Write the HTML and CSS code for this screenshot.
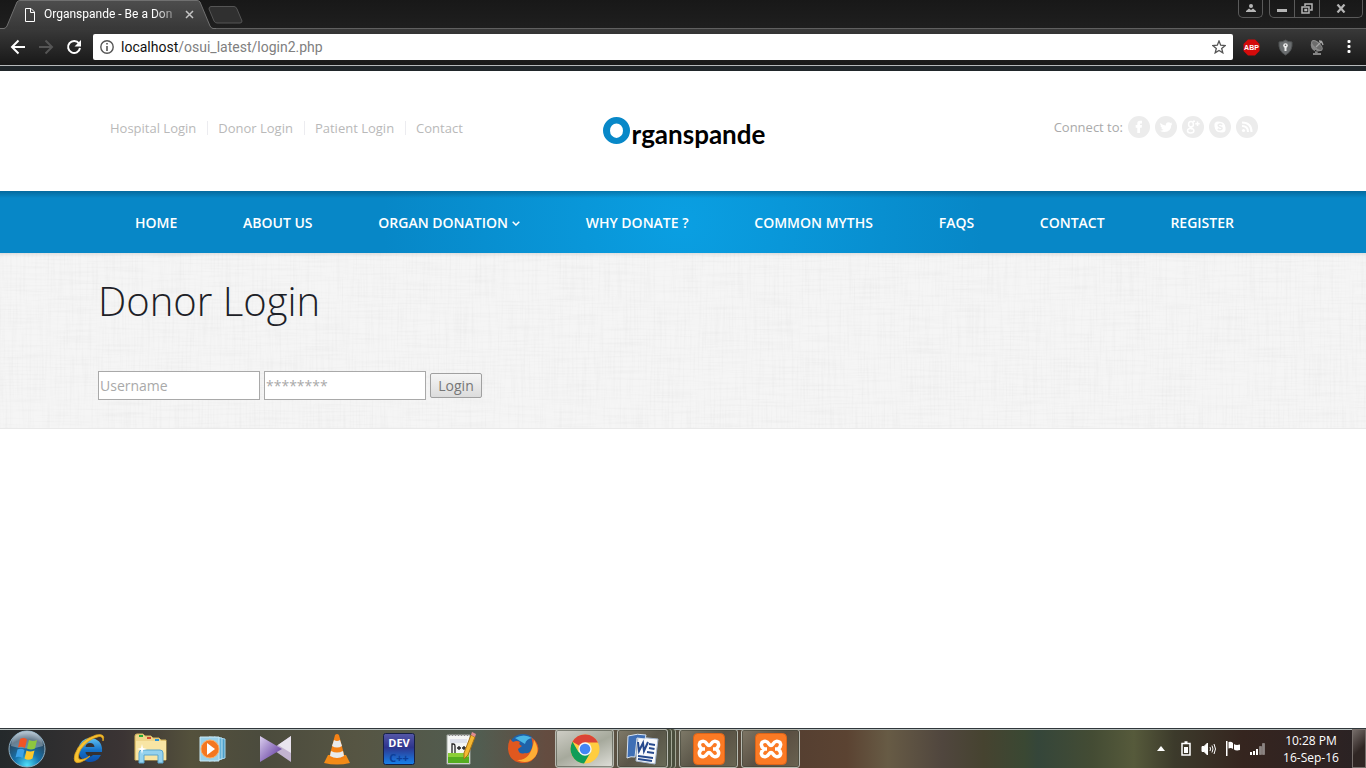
FILE: index.html
```html
<!DOCTYPE html>
<html lang="en">
<head>
<meta charset="utf-8">
<meta name="viewport" content="width=device-width, initial-scale=1">
<title>Organspande - Be a Donor</title>
<link rel="stylesheet" href="styles.css">
</head>
<body>
<div class="browser">
  <div class="tabs">
    <div class="tab">
      <svg class="tab-shape" width="216" height="29" viewBox="0 0 216 29" aria-hidden="true">
        <defs><linearGradient id="tabfill" x1="0" y1="0" x2="0" y2="1"><stop offset="0" stop-color="#4d4d4d"/><stop offset="1" stop-color="#383838"/></linearGradient></defs>
        <path d="M0 28.5H4Q6 28 7 26L17 2Q18 .5 20 .5H197Q199 .5 200 2L210 26Q211 28 213 28.5V29H0Z" fill="url(#tabfill)"/>
        <path d="M0 28.5H4Q6 28 7 26L17 2Q18 .5 20 .5H197Q199 .5 200 2L210 26Q211 28 213 28.5H216" fill="none" stroke="#707070"/>
      </svg>
      <svg class="tab-file" width="10" height="14" viewBox="0 0 10 14" fill="none" stroke="#fff" aria-hidden="true"><path d="M.5.5H6L9.500 4V13.500H.5ZM5.500.5V4.500H9.500"/></svg>
      <span class="tab-title">Organspande - Be a Don</span>
      <button class="tab-close" aria-label="Close tab"><svg width="9" height="9" viewBox="0 0 9 9" stroke="#c4c4c4" stroke-width="1.500"><path d="M1 1L8 8M8 1L1 8"/></svg></button>
    </div>
    <button class="new-tab" aria-label="New tab"><svg width="36" height="18" viewBox="0 0 36 18"><path d="M3 .5H26Q28 .5 29 3L34 15Q34 17 32 17H9Q7 17 6 15L1 3Q1 .5 3 .5Z" fill="#303030" stroke="#555"/></svg></button>
    <div class="win-buttons">
      <button class="win-user" aria-label="Profile"><svg width="10" height="9" viewBox="0 0 10 9" fill="#b5b5b5"><circle cx="5" cy="2" r="2"/><path d="M0 8V7L3 4.500 5 6 7 4.500 10 7V8Z"/></svg></button>
      <div class="win-group">
        <button class="win-min" aria-label="Minimize"><svg width="10" height="9" viewBox="0 0 10 9" fill="#b5b5b5"><path d="M0 5H10V8H0Z"/></svg></button>
        <button class="win-max" aria-label="Restore"><svg width="12" height="11" viewBox="0 0 12 11" fill="none" stroke="#b5b5b5" stroke-width="1.500"><path d="M4 3V1H11V7H9M1 4H8V10H1ZM4 6.500H5.500V7.500H4Z"/></svg></button>
        <button class="win-close" aria-label="Close"><svg width="10" height="9" viewBox="0 0 10 9" stroke="#b5b5b5" stroke-width="2.200"><path d="M1.500 .5L8.500 8.500M8.500 .5L1.500 8.500"/></svg></button>
      </div>
    </div>
  </div>
  <div class="toolbar">
    <button class="tool" aria-label="Back"><svg width="16" height="16" viewBox="0 0 16 16" fill="none" stroke="#fff" stroke-width="2"><path d="M15 8H2.500M8.500 1.500L2 8L8.500 14.500"/></svg></button>
    <button class="tool" aria-label="Forward"><svg width="16" height="16" viewBox="0 0 16 16" fill="none" stroke="#555" stroke-width="2"><path d="M1 8H13.500M7.500 1.500L14 8L7.500 14.500"/></svg></button>
    <button class="tool" aria-label="Reload"><svg width="16" height="16" viewBox="0 0 16 16"><path d="M13 4.500A6 6 0 1 0 14 9" fill="none" stroke="#fff" stroke-width="2"/><path d="M15 1V7.500H8.500Z" fill="#fff"/></svg></button>
    <div class="address">
      <svg width="14" height="14" viewBox="0 0 14 14" aria-hidden="true"><circle cx="7" cy="7" r="6.200" fill="none" stroke="#555" stroke-width="1.400"/><path d="M6.200 3H7.800V4.600H6.200ZM6.200 6H7.800V11H6.200Z" fill="#555"/></svg>
      <a class="url" href="#"><b>localhost</b>/osui_latest/login2.php</a>
      <button class="star" aria-label="Bookmark this page"><svg width="14" height="14" viewBox="0 0 14 14" fill="none" stroke="#555" stroke-width="1.300"><path d="M7 1L8.700 5.200L13.200 5.500L9.700 8.400L10.800 12.800L7 10.400L3.200 12.800L4.300 8.400L.8 5.500L5.300 5.200Z"/></svg></button>
    </div>
    <div class="extensions">
      <button class="ext" aria-label="Adblock Plus"><svg width="17" height="17" viewBox="0 0 17 17"><path d="M5 .5H12L16.500 5V12L12 16.500H5L.5 12V5Z" fill="#d40b0b"/><text x="8.500" y="11" class="abp">ABP</text></svg></button>
      <button class="ext" aria-label="Privacy"><svg width="15" height="17" viewBox="0 0 15 17"><path d="M7.500 1Q10 3 14 3Q15 12 7.500 16Q0 12 1 3Q5 3 7.500 1Z" fill="#6b6e70" stroke="#505354"/><circle cx="7.500" cy="6.500" r="2.300" fill="#eee"/><path d="M6.500 7H8.500V12H6.500Z" fill="#eee"/><circle cx="7.500" cy="6.300" r=".8" fill="#555"/></svg></button>
      <button class="ext" aria-label="Satellite"><svg width="15" height="17" viewBox="0 0 15 17"><path d="M2 2Q-1 7 3 11Q7 14 12 11ZM6 11L8 14H11V16H3V14H5V11Z" fill="#858585"/><ellipse cx="7" cy="6.500" rx="3" ry="6.500" transform="rotate(-48 7 6.500)" fill="#6c6c6c" stroke="#8d8d8d"/><path d="M6 8L12 2M9 2Q12 2 13 6" stroke="#a5a5a5" stroke-width="1.300" fill="none"/></svg></button>
      <button class="ext ext-menu" aria-label="Menu"><svg width="4" height="14" viewBox="0 0 4 14" fill="#fff"><rect x=".5" y="0" width="3" height="3" rx="1"/><rect x=".5" y="5" width="3" height="3" rx="1"/><rect x=".5" y="10" width="3" height="3" rx="1"/></svg></button>
    </div>
  </div>
</div>

<div class="page">
  <header class="header">
    <div class="container header-row">
      <ul class="quick">
        <li><a href="#">Hospital Login</a></li>
        <li><a href="#">Donor Login</a></li>
        <li><a href="#">Patient Login</a></li>
        <li><a href="#">Contact</a></li>
      </ul>
      <a class="logo" href="#" aria-label="Organspande">
        <svg width="27" height="27" viewBox="0 0 27 27"><path fill-rule="evenodd" fill="#0888c8" d="M13.500 0A13.500 13.500 0 1 1 13.500 27A13.500 13.500 0 1 1 13.500 0ZM13.500 6.500A6.500 7.200 0 1 0 13.500 20.900A6.500 7.200 0 1 0 13.500 6.500Z"/></svg>
        <span>rganspande</span>
      </a>
      <div class="social">
        <span>Connect to:</span>
        <a href="#" aria-label="Facebook"><svg viewBox="0 0 22 22"><path d="M9.300 17V11.700H7.700V9H9.300V7.500Q9.300 4.800 12 4.800H14V7.500H12.700Q12 7.500 12 8.200V9H14L13.700 11.700H12V17Z"/></svg></a>
        <a href="#" aria-label="Twitter"><svg viewBox="0 0 22 22"><path d="M5.300 7Q7.800 9.500 10.800 9.400Q10.600 6.500 13.500 6.300Q14.800 6.300 15.500 7L17 6.500L16.500 8L17.500 7.800L16.300 9.300Q16 16 9.500 16Q7 16 5 14.800Q7.300 14.800 8.500 13.800Q6.800 13.500 6.300 12H7.300Q5.500 11.200 5.400 9.500L6.300 9.800Q4.600 8.500 5.300 7Z"/></svg></a>
        <a href="#" aria-label="Google Plus"><svg viewBox="0 0 22 22"><ellipse cx="9" cy="8.300" rx="2.400" ry="2.800" class="line"/><ellipse cx="8.700" cy="14.800" rx="3.200" ry="2.200" class="line"/><path d="M11 5.300H13M10 10.500Q7.500 11 8.500 12L10.500 13M15.500 5.500V10M13.300 7.700H17.700" class="line"/></svg></a>
        <a href="#" aria-label="Skype"><svg viewBox="0 0 22 22"><circle cx="9" cy="9" r="3.600"/><circle cx="13" cy="13" r="3.600"/><circle cx="11" cy="11" r="5.300"/><path class="cut" d="M13.200 8.800Q11 7.300 9.300 8.800Q8.700 10.400 11 10.900Q13.700 11.500 12.900 13Q11.200 14.500 8.700 13"/></svg></a>
        <a href="#" aria-label="RSS"><svg viewBox="0 0 22 22"><circle cx="7.500" cy="14.500" r="1.600"/><path class="rss" d="M6 10Q12 10 12 16M6 6.500Q15.500 6.500 15.500 16"/></svg></a>
      </div>
    </div>
  </header>
  <nav class="nav" aria-label="Main">
    <ul class="container menu">
      <li><a href="#">HOME</a></li>
      <li><a href="#">ABOUT US</a></li>
      <li><a href="#">ORGAN DONATION <svg width="8" height="5" viewBox="0 0 8 5" fill="none" stroke="#fff" stroke-width="1.500"><path d="M.7.7L4 4L7.300.7"/></svg></a></li>
      <li><a href="#">WHY DONATE ?</a></li>
      <li><a href="#">COMMON MYTHS</a></li>
      <li><a href="#">FAQS</a></li>
      <li><a href="#">CONTACT</a></li>
      <li><a href="#">REGISTER</a></li>
    </ul>
  </nav>
  <main class="login">
    <svg class="linen" width="100%" height="100%" aria-hidden="true">
      <filter id="weave-h" x="0" y="0" width="100%" height="100%"><feTurbulence type="fractalNoise" baseFrequency="0.02 0.5" numOctaves="2" seed="4"/><feColorMatrix values="0 0 0 0 0  0 0 0 0 0  0 0 0 0 0  .05 0 0 0 -.022"/></filter>
      <filter id="weave-v" x="0" y="0" width="100%" height="100%"><feTurbulence type="fractalNoise" baseFrequency="0.5 0.02" numOctaves="2" seed="9"/><feColorMatrix values="0 0 0 0 0  0 0 0 0 0  0 0 0 0 0  .05 0 0 0 -.022"/></filter>
      <rect width="100%" height="100%" filter="url(#weave-h)"/>
      <rect width="100%" height="100%" filter="url(#weave-v)"/>
    </svg>
    <div class="container login-body">
      <h1>Donor Login</h1>
      <form class="form">
        <input type="text" placeholder="Username" aria-label="Username">
        <input type="password" placeholder="********" aria-label="Password">
        <button type="button">Login</button>
      </form>
    </div>
  </main>
</div>

<footer class="taskbar">
  <button class="start" aria-label="Start"><svg width="38" height="38" viewBox="0 0 38 38">
    <defs><radialGradient id="orb" cx=".5" cy=".95" r=".9"><stop offset="0" stop-color="#4fe0fa"/><stop offset=".4" stop-color="#1673ad"/><stop offset=".8" stop-color="#29475f"/><stop offset="1" stop-color="#8ba2b5"/></radialGradient></defs>
    <circle cx="19" cy="19" r="18" fill="url(#orb)" stroke="#8fb0c4"/><path d="M3 16A16 15 0 0 1 35 16Q19 21 3 16Z" fill="#fff" opacity=".3"/>
    <path d="M12 9Q16 7 19 9.500L17 18Q13 16 10 17.500Z" fill="#ef5426"/><path d="M21 10Q25 12 29 10L27 18.500Q23 20.500 19 18.500Z" fill="#8dc73f"/><path d="M9.500 19.500Q13 18 16.500 20L14.500 28Q11 26 7.500 27.500Z" fill="#3ba2e8"/><path d="M18.500 20.500Q22 22.500 26.500 20.500L24.500 28.500Q20 31 16.500 28.500Z" fill="#fdc82b"/></svg></button>
  <div class="pinned">
    <button aria-label="Internet Explorer"><svg width="34" height="34" viewBox="0 0 34 34"><defs><linearGradient id="ie" x1="0" y1="0" x2="0" y2="1"><stop offset="0" stop-color="#61c3f3"/><stop offset=".5" stop-color="#1673c8"/><stop offset="1" stop-color="#0b4dab"/></linearGradient></defs><path fill-rule="evenodd" d="M18 6A12 12 0 1 0 29 23H21Q18 26 15 23Q13.500 22 13.500 20H30Q31 7 18 6ZM13.500 15Q14 11 18 11Q22 11 22.500 15Z" fill="url(#ie)"/><path d="M31 9Q34 1 24 3Q8 8 3 22Q0 33 9 30Q14 28 18 24Q10 29 7 27Q5 24 9 17Q16 7 27 4.500Q31 4 31 9Z" fill="#f8c332" stroke="#dca01c" stroke-width=".8"/></svg></button>
    <button aria-label="File Explorer"><svg width="34" height="32" viewBox="0 0 34 32"><path d="M1 3Q1 1 3 1H9L11 3H17L19 5H25L27 7H32V27H1Z" fill="#efd58a" stroke="#d3b45d"/><path d="M2 8H32V27H2Z" fill="#f8e5a4"/><path d="M5 2H9V4H5Z" fill="#26aa38"/><path d="M13 4H17V6H13Z" fill="#d3482f"/><path d="M21 6H25V8H21Z" fill="#2992d6"/><path d="M5 30V20Q5 17 8 17H26Q29 17 29 20V30H24V22H10V30Z" fill="#95d2ee" stroke="#5ba5cc"/><path d="M8 11L9 15 13 16 9 17 8 21 7 17 3 16 7 15Z" fill="#fff"/></svg></button>
    <button aria-label="Media Player"><svg width="30" height="28" viewBox="0 0 30 28"><path d="M16 2L27 4V23L16 26Z" fill="#4d9fc9" stroke="#a8d8ee"/><path d="M11 2L24 3V24L11 26Z" fill="#64b2d8" stroke="#bae2f2"/><path d="M2 2H21V26H2Z" fill="#99d1ea" stroke="#cbe9f5"/><circle cx="12" cy="14" r="9" fill="#f47720" stroke="#ffad62"/><path d="M9 8L17 14L9 20Z" fill="#fff"/></svg></button>
    <button aria-label="KMPlayer"><svg width="34" height="30" viewBox="0 0 34 30"><defs><linearGradient id="km" x1="0" y1="0" x2="1" y2="1"><stop offset="0" stop-color="#dcd0ef"/><stop offset="1" stop-color="#552b97"/></linearGradient></defs><path d="M33 2V28L14 15Z" fill="#c2b4d0"/><path d="M33 2V19L20 11Z" fill="#e9e4ef"/><path d="M2 2L24 15L2 28Z" fill="url(#km)"/></svg></button>
    <button aria-label="VLC"><svg width="28" height="32" viewBox="0 0 28 32"><path d="M5 22H23L27 30Q14 33 1 30Z" fill="#f38b17"/><path d="M12 2Q14 0 16 2L22 25Q14 29 6 25Z" fill="#f48115"/><path d="M11 7Q14 9 17 7L19 13Q14 16 9 13ZM8 18Q14 21 20 18L21 23Q14 27 7 23Z" fill="#e8eaed"/></svg></button>
    <button aria-label="Dev-C++"><svg width="32" height="32" viewBox="0 0 32 32"><defs><linearGradient id="dev" x1="0" y1="0" x2="0" y2="1"><stop offset="0" stop-color="#5658a8"/><stop offset=".45" stop-color="#2e358d"/><stop offset="1" stop-color="#1683ed"/></linearGradient></defs><rect x=".5" y=".5" width="31" height="31" rx="2" fill="url(#dev)" stroke="#162044"/><text x="16" y="14" class="dev-top">DEV</text><text x="16" y="29" class="dev-low">C++</text></svg></button>
    <button aria-label="Notepad++"><svg width="32" height="34" viewBox="0 0 32 34"><path d="M2 3H25V32H2Z" fill="#f4f6f4" stroke="#a3aaa3"/><path d="M3 21H24V31H3Z" fill="#8ccf37"/><path d="M3 25H24V31H3Z" fill="#55ad20"/><path d="M4 3H24" stroke="#888" stroke-width="2" stroke-dasharray="1 2"/><path d="M5 8H22M5 10H22" stroke="#c8cde0"/><path d="M7 21V12H8.500Q10 12 10 14V21M12 16H16M14 14V18M17 16H21M19 14V18" fill="none" stroke="#222" stroke-width="1.300"/><path d="M26 3L30 5L23 23L19 27L19 21Z" fill="#f4b832" stroke="#a87214"/><path d="M26 3L27 0L31 2L30 5Z" fill="#e08b90"/></svg></button>
    <button aria-label="Firefox"><svg width="32" height="32" viewBox="0 0 32 32"><circle cx="16" cy="15" r="14" fill="#1f62a9"/><path d="M8 5Q17 0 25 5Q19 6 18 11Z" fill="#4ab5e5"/><path d="M3 6L6 9Q10 7 13 9Q11 12 15 13L11 16Q12 22 18 20Q22 21 24 17Q27 11 24 4Q34 11 30.500 20Q26 31 14 30Q2 28 1 16Q1 10 3 6Z" fill="#e0581f"/><path d="M27 7Q34 18 27 25Q20 32 10 27Q24 28 27 7Z" fill="#fdae35"/></svg></button>
  </div>
  <div class="windows">
    <button class="win active" aria-label="Chrome"><svg width="30" height="30" viewBox="0 0 30 30"><circle cx="15" cy="15" r="14.500" fill="#ffcd40"/><path d="M15 15L2.500 7.700A14.500 14.500 0 0 1 28 8.500H15Z" fill="#db4437"/><path d="M2.500 7.700A14.500 14.500 0 0 0 14 29.500L20.600 18.200L15 15L8.500 18Z" fill="#0f9d58"/><circle cx="15" cy="15" r="6.700" fill="#f5f5f5"/><circle cx="15" cy="15" r="5.300" fill="#4285f4"/></svg></button>
    <button class="win stacked" aria-label="Word"><svg width="34" height="32" viewBox="0 0 34 32"><path d="M12 4L32 6L29 31L10 28Z" fill="#f8fafc" stroke="#a5b6ce"/><path d="M23 11L29 12M23 15L28.500 16M21 19L28 20M12 23L27 25M12 26L26 28" stroke="#25498d" stroke-width="1.800"/><path d="M2 3Q12 0 20 2L19 6L11 5L9 24Q5 23 1 25Z" fill="#3f6fb5" stroke="#dae5f2"/><path d="M12 9L13 18L17 10L18 18L22 9" fill="none" stroke="#25498d" stroke-width="2"/></svg></button>
    <button class="win" aria-label="XAMPP Control"><svg width="32" height="32" viewBox="0 0 32 32"><rect x=".5" y=".5" width="31" height="31" rx="4" fill="#fb7a24" stroke="#dd6418"/><path d="M9 16Q5 13 7 9.500Q11 6.500 14 11Q16 14 18 11Q21 6.500 25 9.500Q27 13 23 16Q27 19 25 22.500Q21 25.500 18 21Q16 18 14 21Q11 25.500 7 22.500Q5 19 9 16ZM9 16H12M20 16H23" class="xampp"/></svg></button>
    <button class="win" aria-label="XAMPP"><svg width="32" height="32" viewBox="0 0 32 32"><rect x=".5" y=".5" width="31" height="31" rx="4" fill="#fb7a24" stroke="#dd6418"/><path d="M9 16Q5 13 7 9.500Q11 6.500 14 11Q16 14 18 11Q21 6.500 25 9.500Q27 13 23 16Q27 19 25 22.500Q21 25.500 18 21Q16 18 14 21Q11 25.500 7 22.500Q5 19 9 16ZM9 16H12M20 16H23" class="xampp"/></svg></button>
  </div>
  <div class="tray">
    <svg class="more" width="8" height="5" viewBox="0 0 8 5" fill="#fff"><path d="M4 0L8 5H0Z"/></svg>
    <svg width="10" height="15" viewBox="0 0 10 15" fill="none" stroke="#fff" stroke-width="1.500"><path d="M1 2.500H9V14H1ZM3.500 1H6.500"/><path d="M3 6H7V12H3Z" fill="#fff" stroke="none"/></svg>
    <svg width="15" height="14" viewBox="0 0 15 14" fill="none" stroke="#fff"><path d="M1 4.500H3L6.500 1V13L3 9.500H1Z" fill="#fff"/><path d="M9 5Q10 7 9 9M11 3.500Q13 7 11 10.500M13 2Q16 7 13 12"/></svg>
    <svg width="14" height="15" viewBox="0 0 14 15" fill="#fff"><path d="M0 0H1.500V15H0ZM2.500 1Q5 0 7 2V8Q5 6.500 2.500 7.500ZM8 3Q10 4.500 14 3.500V9Q10 10 8 8.500Z"/></svg>
    <svg width="15" height="12" viewBox="0 0 15 12" fill="#fff"><path d="M0 9H2V12H0ZM3 8H5V12H3ZM6 6H8V12H6Z"/><path d="M9.500 3.500H11.500V11.500H9.500ZM12.500 .5H14.500V11.500H12.500Z" fill="#8b8583" stroke="#aaa5a3" stroke-width=".5"/></svg>
    <div class="clock"><span>10:28 PM</span><span>16-Sep-16</span></div>
    <button class="desktop" aria-label="Show desktop"></button>
  </div>
</footer>
</body>
</html>
```
FILE: styles.css
```css
* { box-sizing: border-box; }

body {
  margin: 0;
  min-height: 100vh;
  display: flex;
  flex-direction: column;
  background: #fff;
  font-family: "Open Sans", "Noto Sans", sans-serif;
  color: #777;
}

button { border: 0; padding: 0; background: none; font: inherit; color: inherit; }
a { color: inherit; text-decoration: none; }
ul { margin: 0; padding: 0; list-style: none; }
svg { display: block; flex: none; }

/* Browser frame */
.browser { background: #1b1b1b; border-bottom: 5px solid #20262a; }
.tabs { display: flex; height: 29px; background: linear-gradient(#181818, #1f1f1f); box-shadow: inset 0 -1px #606060; }
.tab { position: relative; display: flex; align-items: center; width: 216px; padding: 0 22px 0 25px; flex: none; }
.tab-shape { position: absolute; top: 0; left: 0; }
.tab-file, .tab-title, .tab-close { position: relative; }
.tab-title {
  flex: 1;
  margin: 0 8px 0 9px;
  white-space: nowrap;
  font: 12px/17px Roboto, sans-serif;
  color: #fff;
  -webkit-mask-image: linear-gradient(90deg, #000 82%, rgba(0, 0, 0, .25));
  mask-image: linear-gradient(90deg, #000 82%, rgba(0, 0, 0, .25));
}
.new-tab { align-self: center; margin-left: -8px; position: relative; }
.win-buttons { display: flex; align-items: flex-start; gap: 6px; margin-left: auto; padding-right: 3px; }
.win-buttons button { display: flex; align-items: center; justify-content: center; height: 17px; }
.win-user, .win-group { border: 1px solid #5a5a5a; border-top: 0; border-radius: 0 0 5px 5px; }
.win-buttons .win-user { width: 25px; height: 18px; }
.win-group { display: flex; }
.win-min, .win-max { width: 25px; border-right: 1px solid #5a5a5a; }
.win-close { width: 42px; }

.toolbar {
  display: flex;
  align-items: center;
  height: 37px;
  padding-left: 4px;
  background: linear-gradient(#393939, #181818);
  border-bottom: 1px solid #b5b9bb;
}
.tool { display: flex; align-items: center; justify-content: center; width: 28px; height: 28px; }
.address { display: flex; flex: 1; align-items: center; gap: 7px; height: 26px; margin-left: 5px; padding: 0 7px; background: #fff; border-radius: 2px; }
.url { flex: 1; font: 14px/20px Roboto, sans-serif; color: #808080; }
.url b { font-weight: 400; color: #111; }
.extensions { display: flex; padding-right: 2px; }
.ext { display: flex; align-items: center; justify-content: center; width: 32px; height: 20px; }
.extensions .ext:first-child { width: 36px; }
.ext-menu { width: 31px; }
.abp { font: 700 7px "Liberation Sans", sans-serif; fill: #fff; text-anchor: middle; }

/* Site header */
.page { flex: 1; }
.container { width: 100%; max-width: 1170px; margin: 0 auto; }
.header-row { display: grid; grid-template-columns: 1fr auto 1fr; align-items: center; height: 120px; padding: 0 10px 6px 12px; font-size: 13px; line-height: 18px; color: #aaa; }
.quick { display: flex; color: #b9b9b9; }
.quick li + li { margin-left: 11px; padding-left: 11px; background: linear-gradient(#ececf0, #ececf0) left center / 1px 14px no-repeat; }
.logo { display: flex; align-items: flex-start; gap: 2px; padding-top: 12px; color: #000; }
.logo span { font: 700 26px/34px Lato, sans-serif; }
.social { display: flex; align-items: center; justify-content: flex-end; gap: 5px; padding-bottom: 2px; }
.social a { width: 22px; height: 22px; border-radius: 50%; background: #ececec; }
.social svg { fill: #fff; }
.social .line { fill: none; stroke: #fff; stroke-width: 1.5; }
.social .rss { fill: none; stroke: #fff; stroke-width: 2; }
.social .cut { fill: none; stroke: #ececec; stroke-width: 1.5; }

.nav {
  background:
    linear-gradient(rgba(0, 50, 80, .35), rgba(0, 50, 80, 0) 7px),
    radial-gradient(circle 300px at center, #0a9fe2, #0787c7);
}
.menu { display: flex; justify-content: space-between; align-items: center; height: 62px; padding: 2px 34px 0 37px; font-size: 14px; font-weight: 600; color: #fff; }
.menu a { display: flex; align-items: center; gap: 4px; white-space: nowrap; line-height: 20px; }

/* Login area */
.login { position: relative; background: #f5f5f5; border-bottom: 1px solid #e9e9e9; box-shadow: inset 0 4px 4px -3px rgba(0, 0, 0, .12); }
.linen { position: absolute; top: 0; left: 0; }
.login-body { position: relative; padding: 20px 0 28px; }
h1 { margin: 0 0 43px; font-size: 40px; line-height: 55px; font-weight: 300; color: #1d2127; }
.form { display: flex; align-items: center; gap: 4px; }
.form input { width: 162px; height: 29px; padding: 1px; border: 1px solid #a9a9a9; background: #fff; font: 14px "Open Sans", sans-serif; color: #777; }
.form input::placeholder { color: #a9a9a9; opacity: 1; }
.form button { width: 52px; height: 25px; border: 1px solid #a0a0a0; border-radius: 2px; background: linear-gradient(#f5f5f5, #dcdcdc); font-size: 14px; line-height: 20px; color: #777; }

/* Desktop taskbar */
.taskbar {
  display: flex;
  height: 40px;
  border-top: 1px solid #30373b;
  box-shadow: inset 0 1px #b4bdbc;
  background: linear-gradient(90deg, #24292b, #3b3434 9%, #54513c 14%, #4b4b3d 19%, #565543 26%, #515d51 35%, #644c40 40%, #555444 48%, #553f31 58%, #5b4332 62%, #675b45 65%, #50463e 69%, #464330 72%, #3a4833 75%, #35463a 76%, #444c34 80%, #565a3b 83%, #3c3a2b 86%, #35251f 91%, #302322 96%, #292224);
}
.start { display: flex; align-items: center; justify-content: center; width: 54px; }
.pinned { display: flex; margin-left: 4px; }
.pinned button { display: flex; align-items: center; justify-content: center; width: 62px; }
.windows { display: flex; gap: 3px; margin-left: 1px; }
.win { display: flex; align-items: center; justify-content: center; width: 59px; height: 39px; border: 1px solid #b8bab1; border-radius: 3px; background: linear-gradient(135deg, #99958399, #5c584c99 50%, #777a6599); box-shadow: inset 0 0 0 1px #3d413788; }
.active { background: linear-gradient(155deg, #d0cfc7, #a6a99c 50%, #dfdfd9); }
.stacked { width: 51px; margin-right: 8px; box-shadow: inset 0 0 0 1px #3d413788, 3px 0 #4a4e3d, 4px 0 #a3a796, 7px 0 #4a4e3d, 8px 0 #a3a796; }
.tray { display: flex; align-items: center; gap: 10px; margin-left: auto; }
.more { margin-right: 6px; }
.clock { display: flex; flex-direction: column; align-items: center; width: 64px; margin-left: 4px; font-size: 12px; line-height: 17px; color: #fff; white-space: nowrap; }
.desktop { align-self: stretch; width: 14px; margin-left: -1px; border: 1px solid #776f6c; background: linear-gradient(135deg, #756c69, #302624 55%); }
.xampp { fill: none; stroke: #fff; stroke-width: 3.5; stroke-linejoin: round; }
.dev-top, .dev-low { font: 700 11px "Open Sans", sans-serif; text-anchor: middle; fill: #fff; }
.dev-low { fill: #0c3f99; }
```
